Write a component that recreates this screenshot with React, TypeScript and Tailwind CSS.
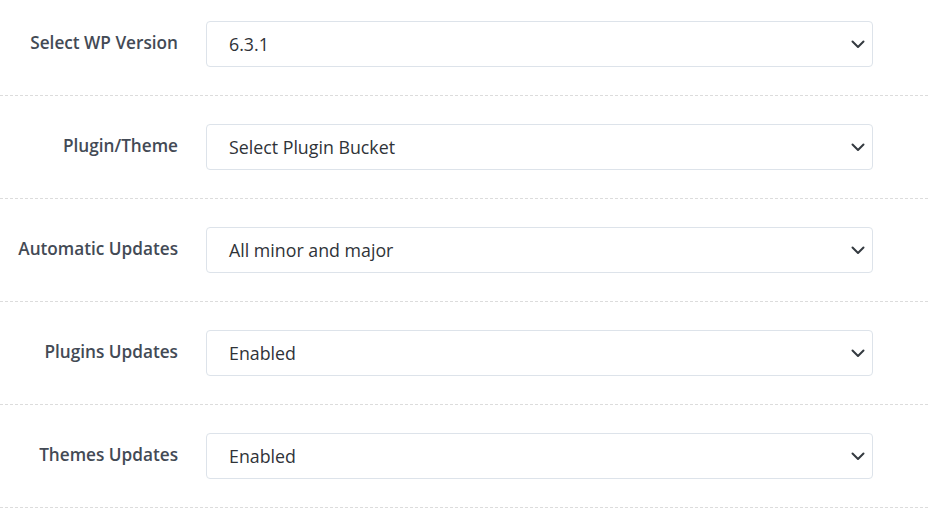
import React from "react";

const rows = [
  { label: "Select WP Version", value: "6.3.1" },
  { label: "Plugin/Theme", value: "Select Plugin Bucket" },
  { label: "Automatic Updates", value: "All minor and major" },
  { label: "Plugins Updates", value: "Enabled" },
  { label: "Themes Updates", value: "Enabled" },
];

function Chevron() {
  return (
    <svg width="16" height="16" viewBox="0 0 16 16" className="shrink-0">
      <path d="M2.5 5.5l5.5 5.5 5.5-5.5" fill="none" stroke="#343a40" strokeWidth="2" strokeLinecap="round" strokeLinejoin="round" />
    </svg>
  );
}

export default function App() {
  return (
    <div className="w-[928px] h-[518px] overflow-hidden bg-white" style={{ fontFamily: '"Open Sans", sans-serif' }}>
      <div className="-mt-[7px]">
        {rows.map((r) => (
          <div key={r.label} className="flex items-center py-[28px] border-b border-dashed border-[#dcdcdc]">
            <div className="w-[178px] text-right text-[17.2px] font-semibold text-[#434a55] -mt-[2px]">{r.label}</div>
            <div className="ml-[28px] w-[667px] h-[46px] flex items-center justify-between pl-[22px] pr-[6px] border border-[#dde3ea] rounded-[4px] text-[17.8px] text-[#2f3338]">
              <span>{r.value}</span>
              <Chevron />
            </div>
          </div>
        ))}
      </div>
    </div>
  );
}
